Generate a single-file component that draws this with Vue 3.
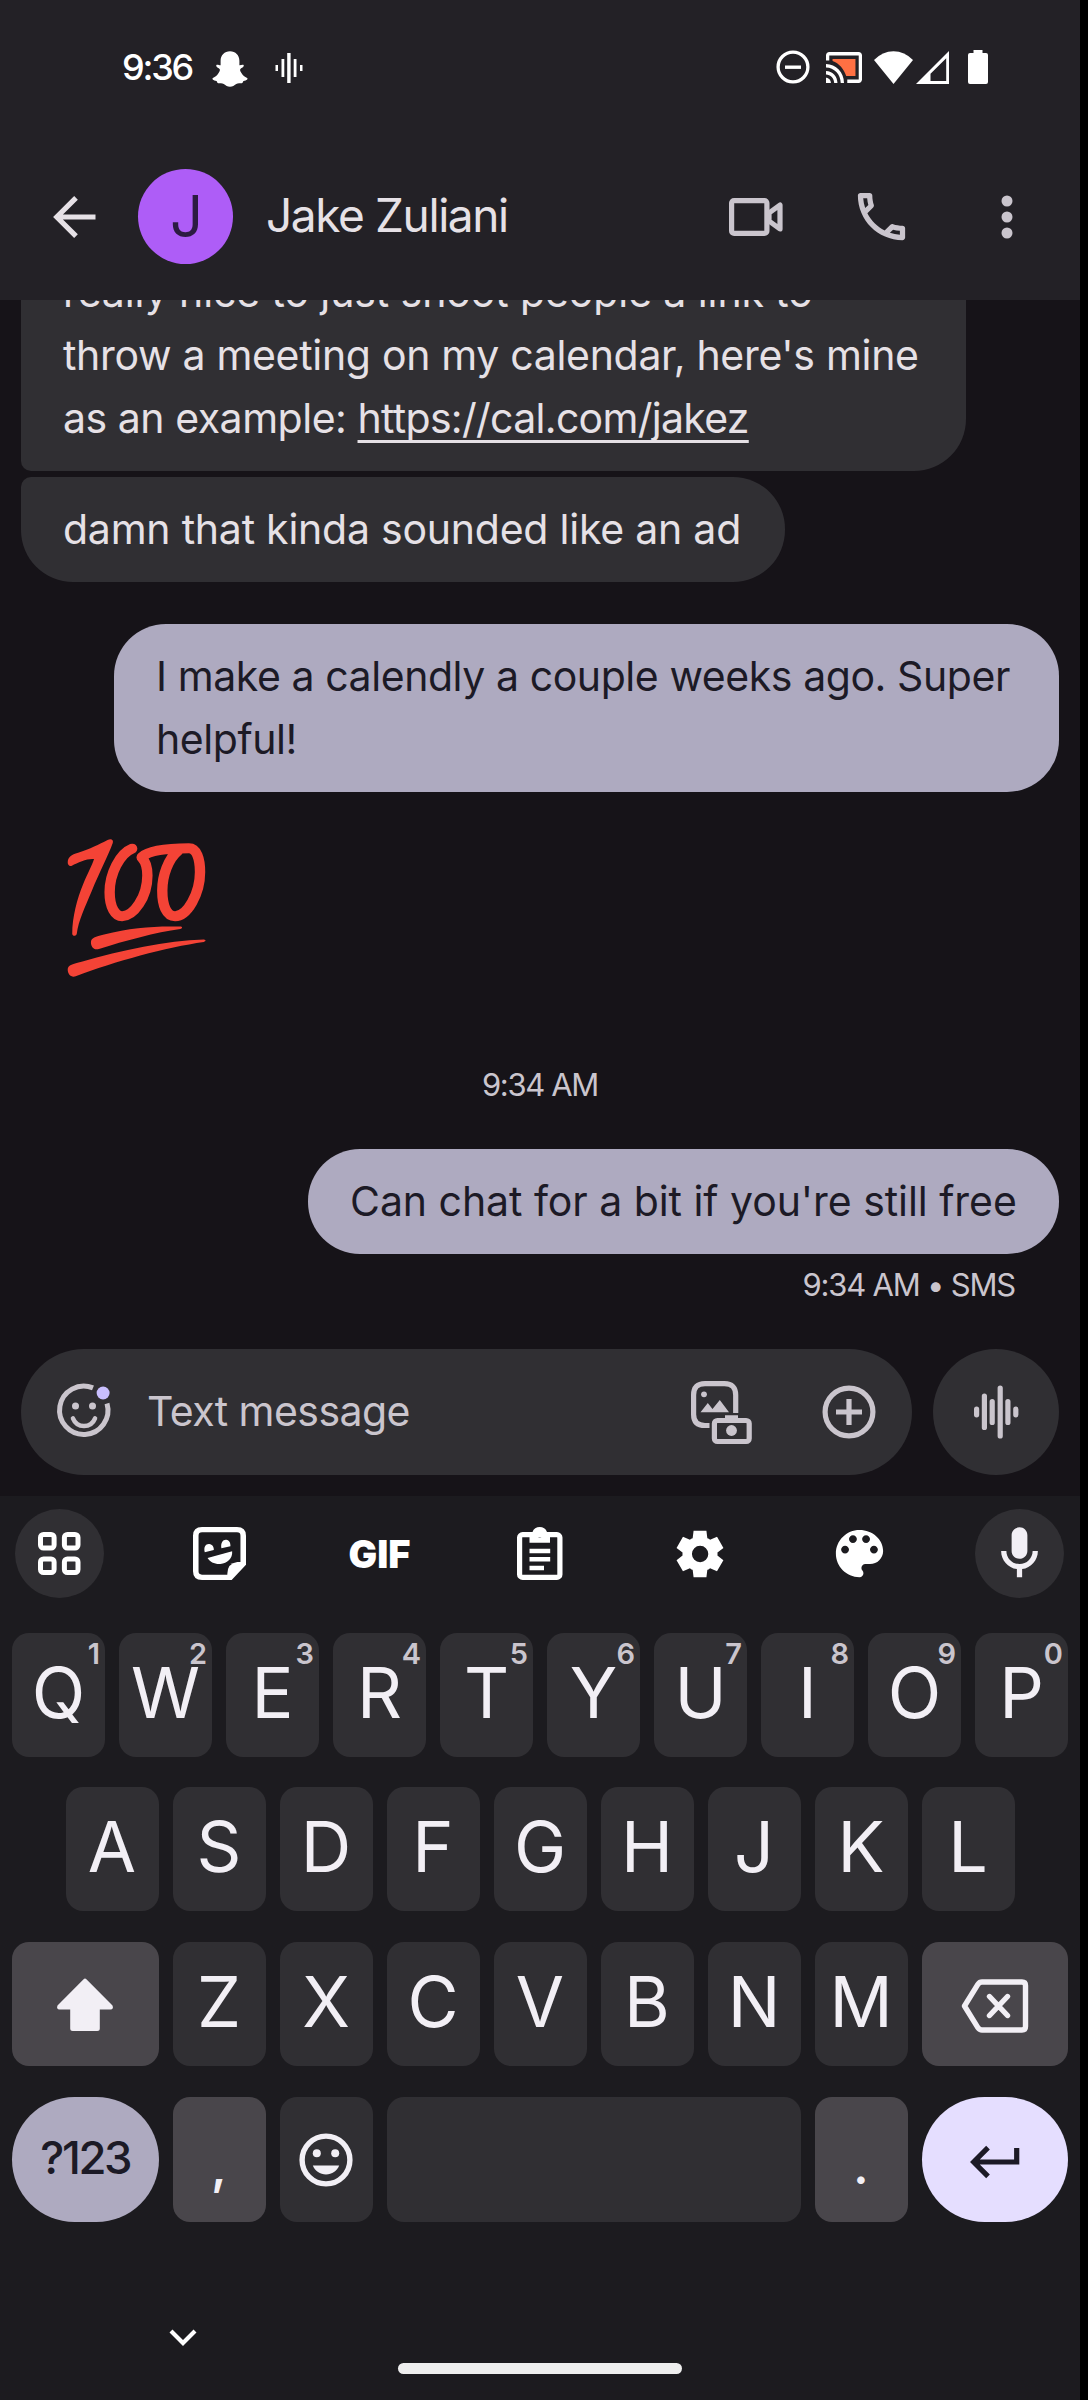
<script setup>
const row1 = 'QWERTYUIOP'.split('').map((letter, i) => ({ letter, hint: String((i + 1) % 10) }))
const row2 = 'ASDFGHJKL'.split('')
const row3 = 'ZXCVBNM'.split('')
</script>

<template>
  <div class="phone">
    <header class="top">
      <div class="status">
        <span class="clock">9:36</span>
        <svg class="ghost" width="36" height="36" viewBox="0 0 36 36" fill="#fff">
          <path d="M18 0.3C12.500 0.300 8.600 4.300 8.600 9.800V14.300C7.300 14.500 5 13 4.300 14.300C3.700 15.800 6.200 16.800 7.600 18C8.300 18.900 7.800 20.200 6.900 21.600C5.200 24.400 3.300 26 0.900 27.100C-0.300 28 1.200 29.600 4.500 30.100C5.500 31 5 32.200 6.300 32.300C8.500 32.200 10 31.800 11.800 32.900C13.800 34.200 15.400 35.700 18 35.700C20.600 35.700 22.200 34.200 24.200 32.900C26 31.800 27.500 32.200 29.700 32.300C31 32.200 30.500 31 31.500 30.100C34.800 29.600 36.300 28 35.100 27.100C32.700 26 30.800 24.400 29.100 21.600C28.200 20.200 27.700 18.900 28.400 18C29.800 16.800 32.300 15.800 31.700 14.300C31 13 28.700 14.500 27.400 14.300V9.800C27.400 4.300 23.500 0.300 18 0.300Z" />
        </svg>
        <svg class="beat" width="28" height="30" viewBox="0 0 28 30" fill="#fff">
          <path d="M0.500 12h2.500v6H0.500zM6.500 6h2.800v18H6.500zM12.200 0h3.400v30h-3.400zM18.700 6h2.800v18h-2.800zM25 12h2.500v6H25z" />
        </svg>
        <div class="tray">
          <svg width="34" height="34" viewBox="0 0 34 34" fill="none" stroke="#fff">
            <circle cx="17" cy="17" r="14.900" stroke-width="3.300" />
            <path d="M9 17.200h16" stroke-width="3.400" />
          </svg>
          <svg class="cast" width="36" height="31" viewBox="1 3 22 18" preserveAspectRatio="none">
            <path fill="#fff" d="M1 18v3h3c0-1.660-1.340-3-3-3zm0-4v2c2.760 0 5 2.240 5 5h2c0-3.870-3.130-7-7-7zm0-4v2c4.970 0 9 4.030 9 9h2c0-6.080-4.930-11-11-11zM21 3H3c-1.100 0-2 .9-2 2v3h2V5h18v14h-7v2h7c1.100 0 2-.9 2-2V5c0-1.100-.9-2-2-2z" />
            <path fill="#ff7043" d="M19 7H5v1.200c3.960 1.280 7.090 4.840 8.370 8.800H19z" />
          </svg>
          <svg class="wifi" width="39" height="33" viewBox="0 0 39 33" fill="#fff">
            <path d="M19.500 33L0 9Q8.500 0.200 19.500 0.200T39 9Z" />
          </svg>
          <svg class="signal" width="33" height="33" viewBox="0 0 33 33">
            <path fill="#fff" fill-rule="evenodd" d="M33 0V33H0ZM30.200 7.200L14.500 22.800V30H30.200Z" />
          </svg>
          <svg class="battery" width="20" height="34" viewBox="0 0 20 34" fill="#fff">
            <path d="M5.500 0h9v3H18q2 0 2 2v27q0 2-2 2H2q-2 0-2-2V5q0-2 2-2h3.500z" />
          </svg>
        </div>
      </div>
      <div class="bar">
        <svg class="back" width="43" height="42" viewBox="0 0 43 42" fill="none" stroke="#e6e1e6" stroke-width="5.200">
          <path d="M42.500 21H4M23 1.800L3.800 21L23 40.200" />
        </svg>
        <div class="avatar">J</div>
        <h1 class="name">Jake Zuliani</h1>
        <div class="actions">
          <svg width="54" height="38" viewBox="0 0 54 38" fill="none" stroke="#cac5cd" stroke-width="5.200" stroke-linejoin="round">
            <rect x="2.600" y="2.600" width="35.300" height="32.800" rx="2.500" />
            <path d="M40 15L51 7V31L40 23Z" />
          </svg>
          <svg class="call" width="63" height="63" viewBox="0 0 24 24" fill="#cac5cd">
            <path d="M6.540 5c.06.890.210 1.760.450 2.590l-1.200 1.200c-.41-1.200-.67-2.470-.76-3.790h1.510m9.860 12.020c.850.240 1.720.390 2.600.450v1.490c-1.320-.09-2.590-.35-3.800-.75l1.200-1.190M7.500 3H4c-.55 0-1 .45-1 1 0 9.390 7.610 17 17 17 .55 0 1-.45 1-1v-3.490c0-.55-.45-1-1-1-1.240 0-2.450-.2-3.570-.57-.1-.04-.21-.05-.31-.05-.26 0-.51.1-.71.29l-2.200 2.200c-2.830-1.450-5.150-3.760-6.590-6.590l2.200-2.200c.280-.28.360-.67.250-1.020C8.700 6.450 8.500 5.250 8.500 4c0-.55-.45-1-1-1z" />
          </svg>
          <svg class="more" width="12" height="44" viewBox="0 0 12 44" fill="#cac5cd">
            <circle cx="6" cy="6" r="5.500" /><circle cx="6" cy="22" r="5.500" /><circle cx="6" cy="38" r="5.500" />
          </svg>
        </div>
      </div>
    </header>

    <main class="chat">
      <div class="clip">
        <div class="bubble in first">
          <p class="l1">really nice to just shoot people a link to</p>
          <p class="l2">throw a meeting on my calendar, here's mine</p>
          <p class="l3">as an example: <a>https://cal.com/jakez</a></p>
        </div>
      </div>
      <div class="bubble in second"><p class="l4">damn that kinda sounded like an ad</p></div>
      <div class="bubble out wide">
        <p class="l5">I make a calendly a couple weeks ago. Super</p>
        <p class="l5">helpful!</p>
      </div>
      <svg class="hundred" width="142" height="142" viewBox="190 110 410 425" preserveAspectRatio="none" fill="#f44336">
        <path d="M195 185C196 170 205 163 225 157C260 146 285 132 310 119C320 114 328 118 325 128C312 165 285 220 265 270C245 320 226 360 221 400C219 407 209 407 208 400C208 350 222 295 240 250C252 220 265 195 271 176C255 173 225 185 207 196C200 199 194 193 195 185Z" />
        <g fill="none" stroke="#f44336" stroke-width="30" stroke-linecap="round" stroke-linejoin="round">
          <path d="M381 145C345 160 316 220 316 275C316 320 332 347 352 347C385 347 425 290 425 225C425 200 421 185 409 172" />
          <path d="M409 170C430 150 490 144 545 144C567 144 577 175 577 215C577 280 540 347 505 347C480 347 468 315 468 270C468 225 485 175 515 150" />
        </g>
        <path d="M262 425C262 412 275 408 300 402C380 380 450 376 522 378C527 380 526 384 520 385C450 395 360 420 285 445C270 450 262 438 262 425Z" />
        <path d="M195 505C196 492 210 490 235 483C350 450 480 420 588 417C595 418 594 422 588 424C480 440 330 482 218 527C205 532 194 520 195 505Z" />
      </svg>
      <div class="stamp">9:34 AM</div>
      <div class="bubble out last"><p class="l7">Can chat for a bit if you're still free</p></div>
      <div class="receipt">9:34 AM • SMS</div>
      <div class="compose">
        <div class="field">
          <svg class="smile" width="54" height="54" viewBox="0 0 54 54" fill="none" stroke="#cac5cd" stroke-width="5">
            <path d="M36 2.900A24.200 24.200 0 1 0 50 18.500" />
            <path d="M16 33.500C20 43.500 34 43.500 38 33.500" stroke-width="4.600" stroke-linecap="round" />
            <g stroke="none"><circle cx="18.500" cy="21" r="3.500" fill="#cac5cd" /><circle cx="35.500" cy="21" r="3.500" fill="#cac5cd" /><circle cx="46.100" cy="8" r="6.500" fill="#c9bfff" /></g>
          </svg>
          <span class="hint">Text message</span>
          <svg class="gallery" width="61" height="63" viewBox="0 0 61 63" fill="none" stroke="#cac5cd" stroke-width="5.200">
            <path d="M44.700 32V14Q44.700 2.600 33.500 2.600H14Q2.600 2.600 2.600 14V33.500Q2.600 44.500 14 44.500H18.500" />
            <rect x="23.400" y="39.500" width="34.800" height="21" rx="3" />
            <g fill="#cac5cd" stroke="none"><circle cx="13" cy="13.300" r="2.900" /><circle cx="40.500" cy="49.500" r="5.400" /><path d="M9.500 31.300L16.800 22L21.500 28L28.800 19L38 31.300ZM34 34.300h13V39H34Z" /></g>
          </svg>
          <svg width="54" height="54" viewBox="0 0 54 54" fill="none" stroke="#cac5cd" stroke-width="5.200">
            <circle cx="27" cy="27" r="23.900" /><path d="M27 14V40M14 27H40" />
          </svg>
        </div>
        <div class="voice">
          <svg width="46" height="54" viewBox="0 0 46 54" stroke="#cac5cd" stroke-width="5.200" stroke-linecap="round">
            <path d="M3.600 24.200V29.800M11.400 11V42.500M19.200 16.500V37.500M27.200 3V51M34.900 16.500V37.500M42.800 24.200V29.800" />
          </svg>
        </div>
      </div>
    </main>

    <section class="keyboard">
      <div class="tools">
        <div class="tool round">
          <svg width="43" height="43" viewBox="0 0 43 43" fill="none" stroke="#fff" stroke-width="5">
            <rect x="2.500" y="2.500" width="13.600" height="13.600" rx="3" /><rect x="26.400" y="2.500" width="13.600" height="13.600" rx="3" /><rect x="2.500" y="26.900" width="13.600" height="13.600" rx="3" /><rect x="26.400" y="26.900" width="13.600" height="13.600" rx="3" />
          </svg>
        </div>
        <div class="tool">
          <svg width="53" height="53" viewBox="556 621 153 159" preserveAspectRatio="none" fill="#fff">
            <path d="M582 629H683Q701 629 701 647V731L664 772H582Q564 772 564 754V647Q564 629 582 629Z" fill="none" stroke="#fff" stroke-width="16" />
            <path d="M704 726H684Q655 730 655 762V774H666L704 734Z" />
            <path d="M590 697C586 680 593 671 603 672C612 673 617 682 616 690ZM638 685C635 668 643 658 652 659C661 660 665 670 664 679ZM598 714L669 694C671 715 655 731 635 732C618 733 605 726 598 714Z" />
          </svg>
        </div>
        <div class="tool gif">GIF</div>
        <div class="tool">
          <svg width="46" height="53" viewBox="0 0 46 53" fill="#fff">
            <rect x="2.600" y="7.600" width="40.300" height="42.800" rx="3" fill="none" stroke="#fff" stroke-width="5.200" />
            <path fill-rule="evenodd" d="M12.500 5H15.500C16.500 1.800 19.500 0 22.700 0S29 1.800 30 5H33V15.700H12.500ZM22.700 5.200a2.700 2.700 0 1 0 .01 0Z" />
            <path d="M12.500 21.800h20.700v4.400h-20.700zM12.500 30h20.700v4.400h-20.700zM12.500 38.800h14.500v4.400h-14.500z" />
          </svg>
        </div>
        <div class="tool">
          <svg width="56" height="56" viewBox="0 0 24 24" fill="#fff">
            <path d="m9.250 22l-.4-3.200q-.325-.125-.612-.3t-.563-.375L4.700 19.375l-2.750-4.750l2.575-1.950Q4.500 12.500 4.500 12.338v-.675q0-.163.025-.338L1.950 9.375l2.750-4.750l2.975 1.250q.275-.2.575-.375t.6-.3l.4-3.200h5.500l.4 3.200q.325.125.613.3t.562.375l2.975-1.250l2.750 4.750l-2.575 1.950q.025.175.025.338v.674q0 .163-.05.338l2.575 1.950l-2.750 4.750l-2.950-1.250q-.275.2-.575.375t-.6.3l-.4 3.200zm2.800-6.500q1.450 0 2.475-1.025T15.550 12t-1.025-2.475T12.050 8.500q-1.475 0-2.488 1.025T8.550 12t1.013 2.475T12.050 15.500" />
          </svg>
        </div>
        <div class="tool">
          <svg width="63" height="63" viewBox="0 0 24 24" fill="#fff">
            <path d="M12 3c-4.970 0-9 4.030-9 9s4.030 9 9 9c.83 0 1.500-.67 1.500-1.500 0-.39-.15-.74-.39-1.010-.23-.26-.38-.61-.38-.99 0-.83.67-1.500 1.500-1.500H16c2.760 0 5-2.240 5-5 0-4.420-4.030-8-9-8zm-5.500 9c-.83 0-1.500-.67-1.500-1.500S5.670 9 6.500 9 8 9.670 8 10.500 7.330 12 6.500 12zm3-4C8.670 8 8 7.330 8 6.500S8.670 5 9.500 5s1.500.67 1.500 1.500S10.330 8 9.500 8zm5 0c-.83 0-1.500-.67-1.500-1.500S13.670 5 14.500 5s1.500.67 1.500 1.500S15.330 8 14.500 8zm3 4c-.83 0-1.500-.67-1.500-1.500S16.670 9 17.500 9s1.500.67 1.500 1.500-.67 1.500-1.500 1.500z" />
          </svg>
        </div>
        <div class="tool round">
          <svg width="63" height="63" viewBox="0 0 24 24" fill="#f2eff5">
            <path d="M12 14c1.660 0 3-1.340 3-3V5c0-1.660-1.340-3-3-3S9 3.340 9 5v6c0 1.660 1.340 3 3 3zM17 11c0 2.760-2.240 5-5 5s-5-2.240-5-5H5c0 3.530 2.610 6.430 6 6.920V21h2v-3.080c3.390-.49 6-3.390 6-6.920h-2z" />
          </svg>
        </div>
      </div>

      <div class="keys r1">
        <div v-for="k in row1" :key="k.letter" class="key">{{ k.letter }}<sup>{{ k.hint }}</sup></div>
      </div>
      <div class="keys r2">
        <div v-for="k in row2" :key="k" class="key">{{ k }}</div>
      </div>
      <div class="keys r3">
        <div class="key big dim">
          <svg class="shift" width="58" height="54" viewBox="0 0 58 54" fill="#f2eff5">
            <path d="M27.600 1.200Q29 0 30.400 1.200L56.500 27.500Q58 31.200 54.500 31.600H43.800V50.500Q43.800 53 41.300 53H16.700Q14.200 53 14.200 50.500V31.600H3.500Q0 31.200 1.500 27.500Z" />
          </svg>
        </div>
        <div v-for="k in row3" :key="k" class="key">{{ k }}</div>
        <div class="key big dim">
          <svg class="erase" width="68" height="54" viewBox="0 0 68 54" fill="none" stroke="#f2eff5" stroke-width="5.400" stroke-linejoin="round">
            <path d="M21 3H61Q64.500 3 64.500 6.500V47.500Q64.500 51 61 51H21Q18.500 51 17 48.800L3.500 27L17 5.200Q18.500 3 21 3Z" />
            <path d="M28.500 17.500L46.500 36.500M46.500 17.500L28.500 36.500" stroke-linecap="round" />
          </svg>
        </div>
      </div>
      <div class="keys r4">
        <div class="key big sym">?123</div>
        <div class="key dim punct">,</div>
        <div class="key">
          <svg class="emoji" width="54" height="54" viewBox="0 0 54 54" fill="#f2eff5">
            <circle cx="27" cy="27" r="23.900" fill="none" stroke="#f2eff5" stroke-width="5.400" />
            <circle cx="17.800" cy="20.200" r="4" /><circle cx="36.200" cy="20.200" r="4" />
            <path d="M13.800 32.500H40.200C38 38 33 41.500 27 41.500S16 38 13.800 32.500Z" />
          </svg>
        </div>
        <div class="key space"></div>
        <div class="key dim punct">.</div>
        <div class="key big enter">
          <svg class="ret" width="50" height="32" viewBox="0 0 50 32" fill="none" stroke="#1c1a26" stroke-width="5.200">
            <path d="M46.700 2V16H4M18 1.700L3.700 16L18 30.300" />
          </svg>
        </div>
      </div>
      <footer class="nav">
        <svg class="down" width="28" height="18" viewBox="0 0 28 18" fill="none" stroke="#fff" stroke-width="4.200">
          <path d="M2 2L14 14L26 2" />
        </svg>
        <div class="home"></div>
      </footer>
    </section>
  </div>
</template>

<style>
body {
  margin: 0;
  background: #000;
}
</style>

<style scoped>
.phone {
  width: 1080px;
  height: 2400px;
  display: flex;
  flex-direction: column;
  overflow: hidden;
  background: #161318;
  font-family: Inter, "Liberation Sans", sans-serif;
  white-space: nowrap;
}
svg { display: block; flex: none; overflow: visible; }
p, h1 { margin: 0; font-weight: 400; }

.top { height: 300px; flex: none; background: #232126; }
.status { height: 134px; padding: 0 92px 0 122px; display: flex; align-items: center; }
.clock { width: 90px; font-size: 36px; font-weight: 500; color: #fff; letter-spacing: -2.200px; }
.ghost { margin-top: 3px; }
.beat { margin: 2px 0 0 27px; }
.tray { margin-left: auto; display: flex; align-items: center; }
.cast { margin-left: 16px; }
.wifi { margin-left: 12px; }
.signal { margin-left: 3px; }
.battery { margin-left: 19px; }

.bar { height: 165px; padding: 0 67px 0 53px; display: flex; align-items: center; }
.avatar { width: 95px; height: 95px; margin-left: 42px; border-radius: 50%; background: #ae5df7; color: #2c1b42; font-size: 58px; font-weight: 400; line-height: 95px; text-align: center; text-indent: 2px; }
.name { margin: -3px 0 0 33px; font-size: 46px; line-height: 60px; color: #e6e1e6; letter-spacing: -1.400px; }
.actions { margin-left: auto; display: flex; align-items: center; }
.call { margin-left: 67px; }
.more { margin-left: 88px; }

.chat { height: 1196px; flex: none; display: flex; flex-direction: column; }
.clip { height: 171px; flex: none; display: flex; align-items: flex-end; overflow: hidden; padding-left: 21px; }
.bubble { box-sizing: border-box; flex: none; padding: 21px 42px; border-radius: 52px; font-size: 41px; line-height: 63px; }
.in { background: #302f33; color: #e6e1e6; }
.out { background: #aeaac0; color: #1c1a26; align-self: flex-end; margin-right: 21px; }
.first { width: 945px; border-radius: 52px 52px 52px 10px; }
.first a { text-decoration: underline; text-decoration-thickness: 3px; text-underline-offset: 7px; text-decoration-skip-ink: none; letter-spacing: -0.700px; }
.l1 { letter-spacing: -0.100px; }
.l2 { letter-spacing: -0.310px; }
.l3 { letter-spacing: -0.470px; }
.l4 { letter-spacing: -0.230px; }
.l5 { letter-spacing: -0.430px; }
.l7 { letter-spacing: -0.050px; }
.second { width: 764px; margin: 6px 0 0 21px; border-top-left-radius: 10px; }
.wide { width: 945px; margin-top: 42px; }
.last { width: 751px; margin-top: 40px; }
.hundred { margin: 45px 0 0 66px; }
.stamp { margin-top: 82px; height: 48px; line-height: 48px; text-align: center; font-size: 31px; color: #cac5cd; letter-spacing: -1.350px; }
.receipt { margin-top: 7px; padding-right: 65px; height: 48px; line-height: 48px; text-align: right; font-size: 31px; color: #cac5cd; letter-spacing: -1.200px; }
.compose { margin-top: auto; padding: 0 21px 21px; display: flex; justify-content: space-between; }
.field { box-sizing: border-box; width: 891px; height: 126px; border-radius: 63px; padding: 0 36px; display: flex; align-items: center; background: #302f33; }
.hint { margin: -2px 0 0 36px; font-size: 41px; color: #cac5cd; letter-spacing: -0.550px; }
.gallery { margin-left: auto; margin-right: 70px; }
.voice { width: 126px; height: 126px; border-radius: 50%; background: #302f33; display: flex; align-items: center; justify-content: center; }

.keyboard { height: 904px; flex: none; background: #1c1b1f; }
.tools { padding: 13px 16px 0 15px; display: flex; justify-content: space-between; }
.tool { width: 89px; height: 89px; display: flex; align-items: center; justify-content: center; }
.round { border-radius: 50%; background: #302f33; }
.gif { color: #fff; font-size: 38px; font-weight: 900; letter-spacing: 0; }
.keys { display: flex; justify-content: space-between; height: 124px; padding: 0 12px; }
.r1 { margin-top: 35px; }
.r2 { margin-top: 30px; padding: 0 65.500px; }
.r3 { margin-top: 31px; }
.r4 { margin-top: 31px; height: 125px; }
.key { position: relative; box-sizing: border-box; width: 93px; padding-bottom: 4px; border-radius: 17px; display: flex; align-items: center; justify-content: center; background: #302f33; color: #f2eff5; font-size: 70px; line-height: 1; }
.key sup { position: absolute; top: 5px; right: 5px; font-size: 29px; line-height: 32px; font-weight: 600; color: #cac5cd; }
.keys .big { width: 146.500px; }
.dim { background: #49464b; }
.keys .sym { border-radius: 62.500px; background: #aeaac0; color: #1c1a26; font-size: 45.500px; font-weight: 500; letter-spacing: -2.400px; }
.punct { font-size: 48px; font-weight: 600; padding: 14px 0 0; }
.space { width: 414px; }
.enter { border-radius: 62.500px; background: #e5deff; }
.shift { margin-top: 5px; }
.erase { margin-top: 8px; }
.emoji { margin-top: 4px; }
.ret { margin-top: 9px; }
.nav { display: flex; flex-direction: column; }
.down { margin: 107px 0 0 169px; }
.home { width: 284px; height: 11px; margin: 16px auto 0; border-radius: 6px; background: #eee; }
</style>
